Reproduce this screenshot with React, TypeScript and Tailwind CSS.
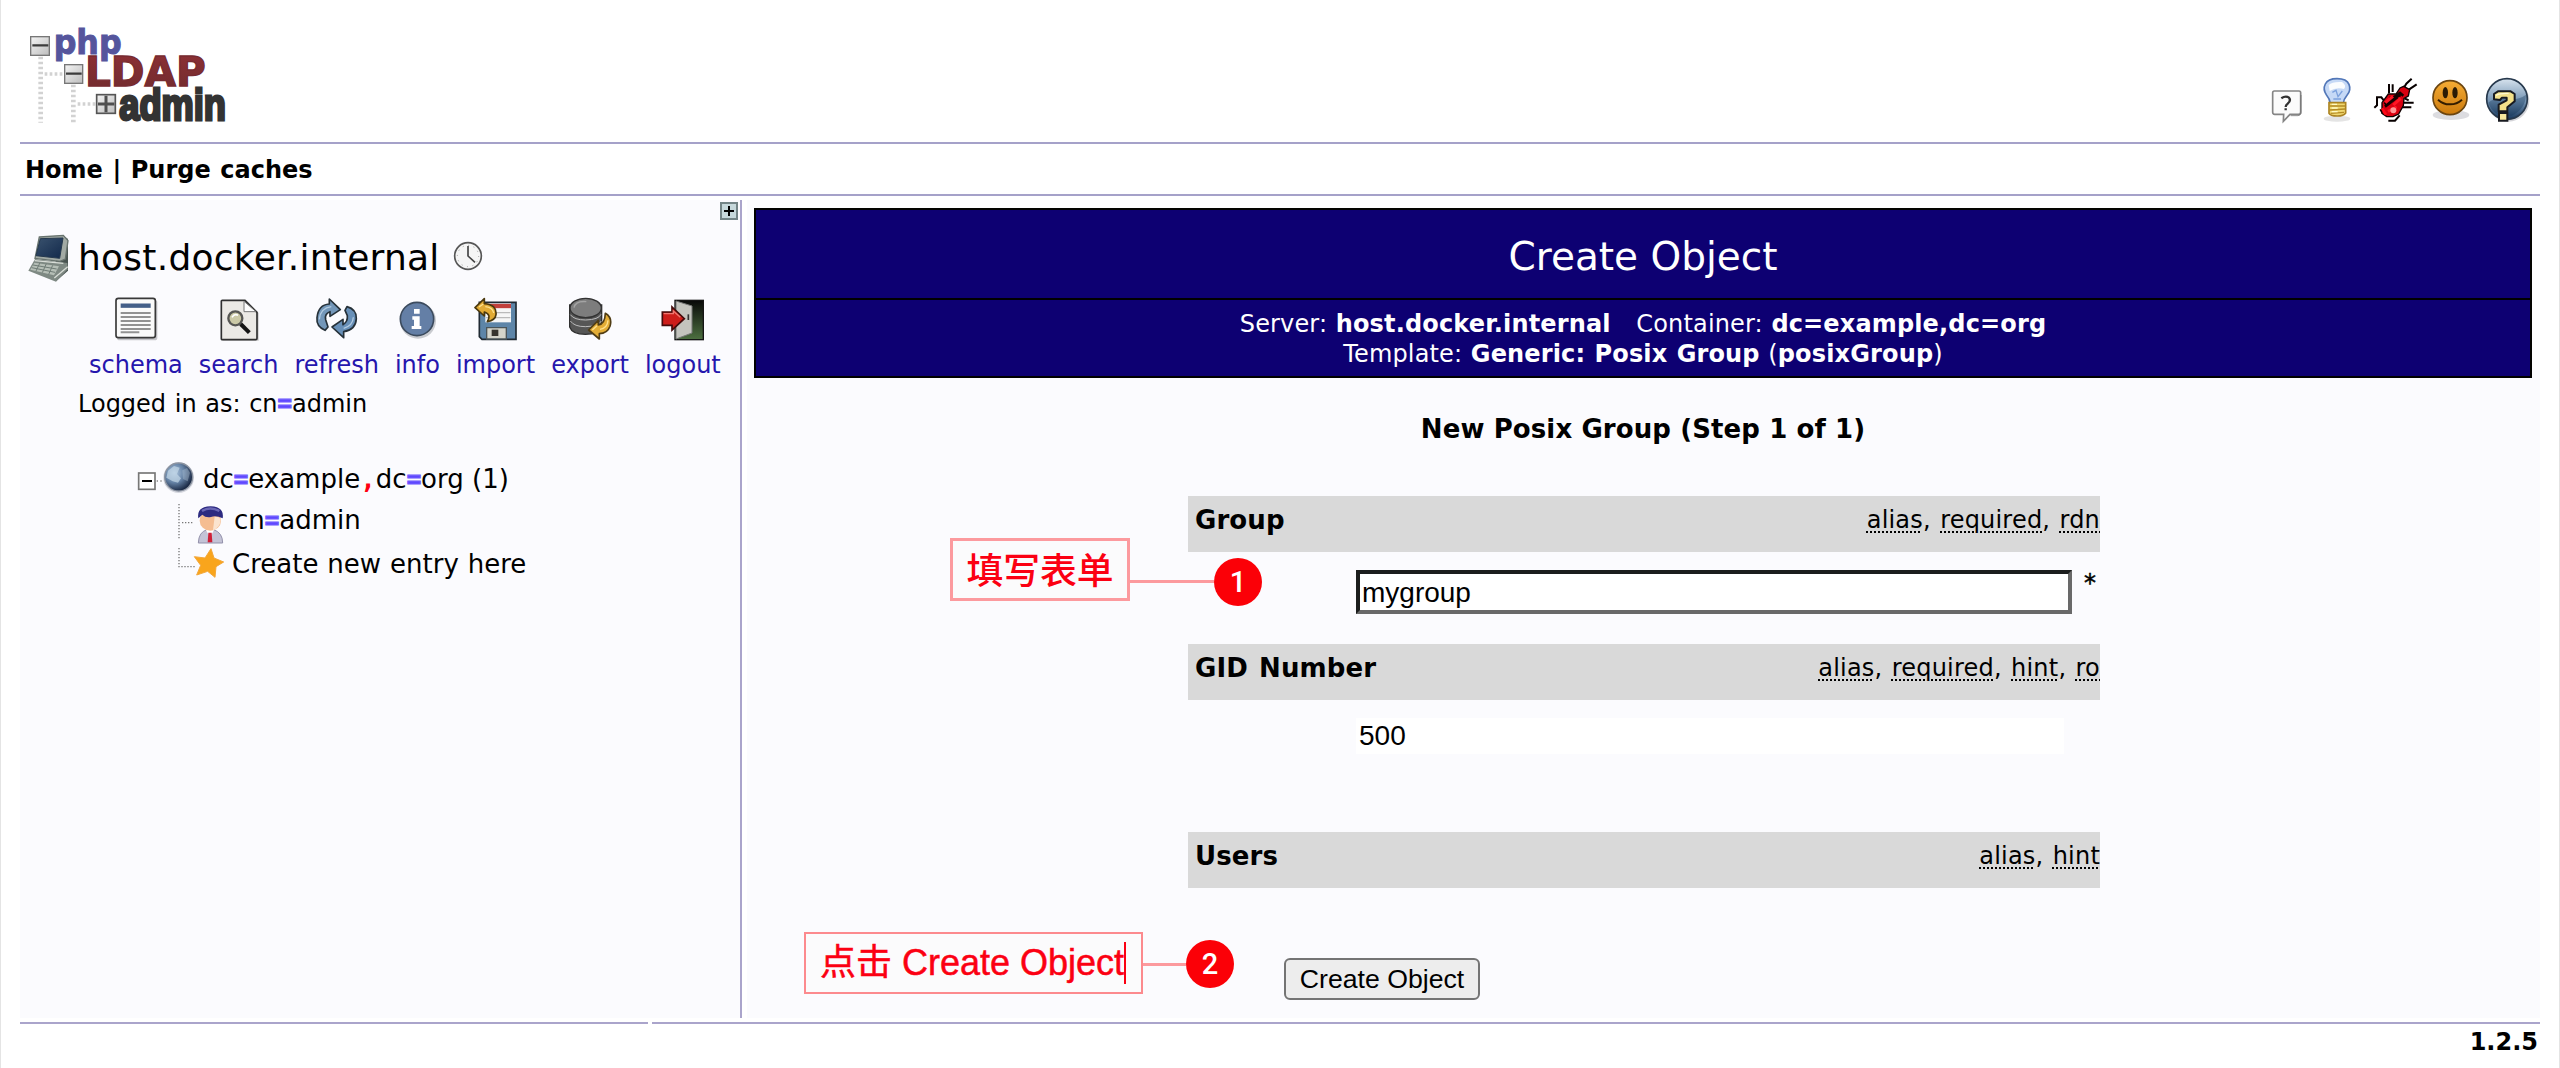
import type { ReactNode } from 'react';

function Logo() {
  return (
    <svg className="mt-5 h-[110px] w-[220px] overflow-visible" viewBox="60 60 660 330">
      <defs>
        <linearGradient id="nodeFill" x1="0" y1="0" x2="1" y2="1">
          <stop offset="0" stopColor="#f4f4f4" />
          <stop offset="1" stopColor="#bdbdbd" />
        </linearGradient>
        <linearGradient id="redFill" x1="0" y1="0" x2="0" y2="1">
          <stop offset="0" stopColor="#8f3035" />
          <stop offset="1" stopColor="#6e2c2e" />
        </linearGradient>
      </defs>
      <g stroke="#d2d2d2" fill="none">
        <path d="M122 170V368M220 254V368" strokeWidth="14" strokeDasharray="8 7" />
        <path d="M134 222H190M233 312H286" strokeWidth="11" strokeDasharray="8 7" />
      </g>
      <g fill="url(#nodeFill)" stroke="#777" strokeWidth="4">
        <rect x="92" y="110" width="56" height="56" />
        <rect x="194" y="194" width="54" height="56" />
        <rect x="290" y="284" width="56" height="56" stroke="#555" strokeWidth="5" />
      </g>
      <path d="M97 136H145M198 221H245" stroke="#3c3c3c" strokeWidth="7" />
      <path d="M294 312H343M318 287V337" stroke="#505050" strokeWidth="9" />
      <g fontFamily="DejaVu Sans" fontWeight="700">
        <text x="161" y="163" fontSize="103" textLength="204" lengthAdjust="spacingAndGlyphs" fill="#55559c" stroke="#55559c" strokeWidth="3">php</text>
        <text x="255" y="258" fontSize="121" textLength="362" lengthAdjust="spacingAndGlyphs" fill="url(#redFill)" stroke="#772b30" strokeWidth="4">LDAP</text>
      </g>
      <text x="358" y="359" fontSize="132" fontFamily="Liberation Sans" fontWeight="700" textLength="320" lengthAdjust="spacingAndGlyphs" fill="#333" stroke="#333" strokeWidth="9">admin</text>
    </svg>
  );
}

function HeaderIcons() {
  return (
    <div className="mt-[75px] flex h-[50px]">
      <svg className="h-[50px] w-11" viewBox="84 75 132 150">
        <path d="M103 123H177Q182 123 182 128V186Q182 193 175 193H150L130 214L131 193H104Q98 193 98 187V128Q98 123 103 123Z" fill="#fbfbfb" stroke="#858585" strokeWidth="5" />
        <path d="M183 135V190Q181 197 174 197H152" fill="none" stroke="#666" strokeWidth="2" />
        <path d="M124 145Q137 136 147 143Q154 152 143 161Q137 165 137 171M137 175V181" fill="none" stroke="#333" strokeWidth="7" />
      </svg>
      <svg className="h-[50px] w-[50px]" viewBox="216 75 150 150">
        <ellipse cx="291" cy="206" rx="40" ry="9" fill="#e4e4e4" />
        <path d="M271 160Q269 146 259 134Q248 118 256 102Q264 86 291 86Q320 86 327 103Q334 120 321 136Q311 148 310 160Z" fill="#c6d9f6" stroke="#5277b8" strokeWidth="5" />
        <path d="M266 105Q277 94 306 96Q321 106 312 117Q288 111 269 123Z" fill="#fff" opacity=".9" />
        <path d="M277 127L288 121L294 140L307 123M280 147H303" stroke="#7ca1dd" strokeWidth="4" fill="none" />
        <path d="M267 158H317V189Q311 198 292 198Q271 198 267 190Z" fill="#f0d870" stroke="#ac8423" strokeWidth="5" />
        <path d="M269 168H315M269 180L315 177M272 190L312 187" stroke="#b48b24" strokeWidth="4" />
        <path d="M275 163H291M275 174H293M275 185H293" stroke="#fffac4" strokeWidth="4" />
      </svg>
      <svg className="h-[50px] w-[60px]" viewBox="366 75 180 150">
        <g fill="none" stroke="#080000" strokeWidth="6">
          <path d="M447 102V130M458 103V126M489 118L499 101L515 86M502 122L530 103M490 158H521M486 172H514M494 145L506 151M432 152L424 142H411V166L403 173M445 212H465L479 196M428 190L421 178" />
        </g>
        <path d="M426 158L445 132H468L480 114L491 109L509 119L505 138L492 145L490 167L476 192L459 200H440L426 190Z" fill="#d90010" stroke="#100000" strokeWidth="4" />
        <path d="M433 162L480 129L490 137M448 145L482 136M435 170L473 141" stroke="#160000" strokeWidth="8" fill="none" />
        <path d="M436 158L459 139M460 165L482 145M444 184L470 171" stroke="#ff1525" strokeWidth="9" />
        <circle cx="460" cy="181" r="9" fill="#ff9494" />
        <path d="M426 175L438 194" stroke="#ff0918" strokeWidth="8" />
      </svg>
      <svg className="h-[50px] w-14" viewBox="546 75 168 150">
        <defs>
          <linearGradient id="smile" x1="0" y1="0" x2="0" y2="1">
            <stop offset="0" stopColor="#f5ac35" />
            <stop offset="1" stopColor="#cc7a0c" />
          </linearGradient>
        </defs>
        <ellipse cx="633" cy="195" rx="55" ry="15" fill="#dcdce0" />
        <circle cx="630" cy="143" r="51" fill="url(#smile)" stroke="#6b4510" strokeWidth="5" />
        <ellipse cx="616" cy="128" rx="8" ry="17" fill="#2b1b05" />
        <ellipse cx="645" cy="128" rx="8" ry="17" fill="#2b1b05" />
        <path d="M594 149Q611 164 631 163Q650 163 666 149" fill="none" stroke="#331d00" strokeWidth="6" />
      </svg>
      <svg className="h-[50px] w-[62px]" viewBox="714 75 186 150">
        <defs>
          <linearGradient id="helpFill" x1="0" y1="0" x2="0" y2="1">
            <stop offset="0" stopColor="#d7e3ee" />
            <stop offset=".55" stopColor="#7594b3" />
            <stop offset="1" stopColor="#17375d" />
          </linearGradient>
        </defs>
        <circle cx="805" cy="152" r="63" fill="#d4d4d8" />
        <circle cx="801" cy="147" r="61" fill="url(#helpFill)" stroke="#27394d" strokeWidth="5" />
        <path d="M745 158Q760 143 790 147Q836 152 858 134Q857 177 815 197Q762 205 745 158Z" fill="#123456" opacity=".35" />
        <path d="M762 148V132L774 124H812L824 132V154L802 172V184H776V164L800 151V143H786L780 150Z" fill="#f3e08a" stroke="#181a20" strokeWidth="6" strokeLinejoin="round" />
        <path d="M777 189H802V212H777Z" fill="#f6e79d" stroke="#181a20" strokeWidth="6" />
        <path d="M768 136Q780 129 806 130" stroke="#fffad0" strokeWidth="4" fill="none" />
      </svg>
    </div>
  );
}

function HostIcon() {
  return (
    <svg className="h-[52px] w-[59px]" viewBox="60 126 177 156">
      <defs>
        <linearGradient id="screen" x1="0" y1="0" x2="1" y2="1">
          <stop offset="0" stopColor="#3a526e" />
          <stop offset="1" stopColor="#12294b" />
        </linearGradient>
      </defs>
      <path d="M188 136L204 147V242L168 274L160 240Z" fill="#495451" />
      <path d="M118 141L190 136L204 152L196 207L180 214L105 205Z" fill="#a2aaa4" stroke="#68736e" strokeWidth="4" />
      <path d="M121 146L189 144L179 205L108 197Z" fill="url(#screen)" stroke="#26394e" strokeWidth="3" />
      <path d="M105 207L202 219L203 238L168 275L85 242Z" fill="#7e8983" />
      <path d="M103 218L177 229L162 256L91 239Z" fill="#b5beb6" />
      <path d="M99 225L170 237M95 233L165 247M120 218L108 243M139 221L127 248M158 226L146 253" stroke="#6f7c76" strokeWidth="3" />
      <path d="M104 212L190 220M163 264L203 230" stroke="#d8ddd7" strokeWidth="4" />
    </svg>
  );
}

function ClockIcon() {
  return (
    <svg className="mt-2 ml-3 h-8 w-8" viewBox="216 150 96 96">
      <circle cx="264" cy="198" r="40" fill="#f5f5f5" stroke="#565656" strokeWidth="5" />
      <circle cx="264" cy="198" r="32" fill="none" stroke="#999" strokeWidth="3" strokeDasharray="3 13.7" />
      <path d="M264 168V198L285 217" fill="none" stroke="#444" strokeWidth="5" />
    </svg>
  );
}

const toolClass = 'h-12 w-11';

const tools: { label: string; icon: ReactNode }[] = [
  {
    label: 'schema',
    icon: (
      <svg className={toolClass} viewBox="338 318 132 144">
        <rect x="347" y="330" width="121" height="121" rx="8" fill="#c5c5c9" />
        <rect x="344" y="325" width="118" height="118" rx="7" fill="#fafafa" stroke="#393939" strokeWidth="5" />
        <path d="M358 347H448" stroke="#445f88" strokeWidth="13" />
        <path d="M358 369H448M358 381H448M358 393H448M358 405H448M358 417H448M358 427H414" stroke="#929292" strokeWidth="6" />
      </svg>
    ),
  },
  {
    label: 'search',
    icon: (
      <svg className={toolClass} viewBox="648 318 132 144">
        <path d="M665 336H740L773 369V452H665Z" fill="#c8c8c8" />
        <path d="M661 333Q661 331 664 331H732L768 367V445Q768 449 764 449H664Q661 449 661 446Z" fill="#ebe9e5" stroke="#303030" strokeWidth="5" />
        <path d="M729 334V365H765Z" fill="#fdfdfd" stroke="#777" strokeWidth="3" />
        <circle cx="703" cy="385" r="21" fill="#cbc9a6" stroke="#565653" strokeWidth="7" />
        <path d="M693 382Q700 370 711 376" stroke="#fff" strokeWidth="5" fill="none" />
        <path d="M719 402L745 428" stroke="#151515" strokeWidth="12" />
      </svg>
    ),
  },
  {
    label: 'refresh',
    icon: (
      <svg className={toolClass} viewBox="944 318 132 144">
        <path d="M974 421Q947 409 950 383Q954 344 987 342V327L1020 359L989 379V365Q972 371 976 389L983 411Z" fill="#7397b9" stroke="#263139" strokeWidth="5" strokeLinejoin="round" />
        <path d="M1040 350Q1069 358 1068 386Q1066 420 1030 425V443L995 411L1028 388V404Q1043 395 1041 377L1034 361Z" fill="#6890b8" stroke="#263139" strokeWidth="5" strokeLinejoin="round" />
        <path d="M957 388Q960 354 993 350M1059 382Q1058 407 1030 415" stroke="#b2cbe1" strokeWidth="4" fill="none" />
      </svg>
    ),
  },
  {
    label: 'info',
    icon: (
      <svg className={toolClass} viewBox="52 318 132 144">
        <circle cx="121" cy="392" r="54" fill="#c9cbd0" />
        <circle cx="118" cy="387" r="50" fill="#647fa6" stroke="#3c4b5e" strokeWidth="5" />
        <path d="M109 357H126V371H109ZM104 379H126V408H131V417H102V408H109V389H104Z" fill="#fff" />
      </svg>
    ),
  },
  {
    label: 'import',
    icon: (
      <svg className={toolClass} viewBox="286 318 132 144">
        <path d="M302 337H412V448H310L302 440Z" fill="#5d85a8" stroke="#202a33" strokeWidth="5" />
        <path d="M320 340H397V397H320Z" fill="#f7f7f7" />
        <path d="M320 348H397" stroke="#c2403c" strokeWidth="13" />
        <path d="M322 368H395M322 383H395" stroke="#bbb" strokeWidth="4" />
        <path d="M324 413H383V447H324Z" fill="#d4d4ca" stroke="#4b5559" strokeWidth="4" />
        <path d="M339 419H359V438H339Z" fill="#37352f" />
        <path d="M289 353L317 326V341Q355 344 352 374Q350 391 326 395Q339 373 317 366V378Z" fill="#e1ab35" stroke="#4b390e" strokeWidth="5" strokeLinejoin="round" />
        <path d="M301 351L314 342M320 350Q342 352 345 369" stroke="#ffe491" strokeWidth="4" fill="none" />
      </svg>
    ),
  },
  {
    label: 'export',
    icon: (
      <svg className={toolClass} viewBox="578 318 132 144">
        <path d="M583 345V411Q591 433 630 433Q671 433 679 411V345Z" fill="#565656" stroke="#303030" strokeWidth="4" />
        <path d="M585 374Q596 390 631 390Q670 389 677 373M585 393Q597 410 630 410Q670 409 678 393" fill="none" stroke="#bcbcbc" strokeWidth="3" />
        <ellipse cx="631" cy="354" rx="47" ry="29" fill="#7d7d7d" stroke="#333" strokeWidth="4" />
        <path d="M596 353Q600 332 633 335" stroke="#a4a4a4" strokeWidth="4" fill="none" />
        <path d="M690 370Q712 383 704 409Q696 431 672 431V447L640 420L669 391V405Q689 403 690 370Z" fill="#e3ad36" stroke="#503d15" strokeWidth="5" strokeLinejoin="round" />
        <path d="M651 420L665 407M674 418Q696 415 698 391" stroke="#ffe18c" strokeWidth="4" fill="none" />
      </svg>
    ),
  },
  {
    label: 'logout',
    icon: (
      <svg className={toolClass} viewBox="850 318 132 144">
        <defs>
          <linearGradient id="doorway" x1="0" y1="0" x2="0" y2="1">
            <stop offset="0" stopColor="#080808" />
            <stop offset="1" stopColor="#4d7040" />
          </linearGradient>
        </defs>
        <rect x="892" y="331" width="85" height="118" fill="url(#doorway)" stroke="#151515" strokeWidth="4" />
        <path d="M895 333L943 348V429L895 447Z" fill="#c4c4be" stroke="#777" strokeWidth="3" />
        <path d="M932 373V390" stroke="#333" strokeWidth="5" />
        <path d="M854 366H883V351L920 386L883 420V406H854Z" fill="#cd1d1a" stroke="#440b0b" strokeWidth="5" />
        <path d="M858 371H887V363L908 382" stroke="#ef7770" strokeWidth="4" fill="none" />
      </svg>
    ),
  },
];

function RootIcons() {
  return (
    <svg className="h-10 w-[73px]" viewBox="90 60 219 120">
      <defs>
        <radialGradient id="globe" cx=".35" cy=".35" r=".7">
          <stop offset="0" stopColor="#aec6df" />
          <stop offset=".5" stopColor="#6582a5" />
          <stop offset="1" stopColor="#121f39" />
        </radialGradient>
      </defs>
      <rect x="116" y="99" width="49" height="49" fill="#fff" stroke="#777" strokeWidth="5" />
      <path d="M126 123H156" stroke="#000" strokeWidth="6" />
      <path d="M170 123H192" stroke="#888" strokeWidth="4" strokeDasharray="4 7" />
      <circle cx="236" cy="113" r="46" fill="#d5d7df" />
      <circle cx="236" cy="111" r="42" fill="url(#globe)" stroke="#8b93a0" strokeWidth="4" />
      <path d="M204 92L222 78L239 83L231 102L243 115L234 128L218 124L199 113Z" fill="#c4d8e8" opacity=".7" />
      <path d="M247 91L261 84L270 98L263 124L249 117Z" fill="#b1c2d4" opacity=".4" />
    </svg>
  );
}

function PersonIcons() {
  return (
    <svg className="h-11 w-16" viewBox="210 183 192 132">
      <path d="M237 192V296M246 248H282" stroke="#777" strokeWidth="4" strokeDasharray="4 5" />
      <path d="M295 309Q296 276 321 269L330 277L341 269Q368 278 368 309Z" fill="#c4c3d6" stroke="#9290aa" strokeWidth="3" />
      <path d="M318 270L330 293L342 270" fill="#fff" />
      <path d="M325 278H335L337 307H323Z" fill="#ce2038" />
      <ellipse cx="331" cy="242" rx="32" ry="30" fill="#f5bd91" />
      <path d="M344 230Q360 229 362 240Q360 263 339 271" fill="#fbe4cf" />
      <path d="M295 235Q289 200 332 199Q374 201 368 235Q348 225 333 231Q317 234 307 224Z" fill="#2c2a80" />
      <path d="M306 213Q330 198 358 213" stroke="#6966b4" strokeWidth="7" fill="none" />
    </svg>
  );
}

function StarIcons() {
  return (
    <svg className="h-11 w-[62px]" viewBox="210 315 186 132">
      <path d="M237 324V380H284" stroke="#777" strokeWidth="4" strokeDasharray="4 5" fill="none" />
      <path d="M333 326L342 354L371 366L348 380L345 412L323 394L290 405L302 376L283 350L315 354Z" fill="#f9a51c" stroke="#f3a73a" strokeWidth="3" />
    </svg>
  );
}

const Eq = () => (
  <span className="font-['DejaVu_Sans_Mono'] text-2xl leading-none font-bold text-[#5f48ff] [-webkit-text-stroke:1.2px_#6f5bff]">=</span>
);

function Notes({ items }: { items: string[] }) {
  return (
    <div className="pt-[9px] leading-[30px] tracking-[0.2px] [word-spacing:1.5px]">
      {items.map((item, i) => (
        <span key={item}>
          {i > 0 && ', '}
          <span className="underline decoration-dotted decoration-2 underline-offset-[3px]">{item}</span>
        </span>
      ))}
    </div>
  );
}

function FieldBar({ title, notes }: { title: string; notes: string[] }) {
  return (
    <div className="flex h-14 justify-between bg-[#d9d9d9] pl-[7px]">
      <div className="pt-[9px] text-[26px] leading-[30px] font-bold tracking-[0.1px] [word-spacing:2px]">{title}</div>
      <Notes items={notes} />
    </div>
  );
}

function Badge({ n }: { n: number }) {
  return (
    <div className="flex size-12 items-center justify-center rounded-full bg-[#fb0007] font-['Roboto'] text-[29px] font-medium text-white">
      {n}
    </div>
  );
}

export default function App() {
  return (
    <div className="h-[1068px] w-[2560px] overflow-hidden bg-white font-['DejaVu_Sans',sans-serif] text-2xl text-black">
      <div className="relative flex h-[1068px] flex-col border-x border-[#e4e4e4] px-[19px]">
        <header className="flex h-[142px] justify-between">
          <Logo />
          <HeaderIcons />
        </header>
        <nav className="h-[54px] border-y-2 border-[#a5a1c9] pt-[11px] pl-[5px] leading-[30px] font-bold [word-spacing:1.2px]">Home | Purge caches</nav>

        <main className="mt-1 flex h-[818px] gap-[5px]">
          <aside className="relative w-[722px] shrink-0 border-r-2 border-[#aaa4cb] bg-[#fbfbfe] pt-8">
            <div className="absolute top-0.5 right-0.5 size-[18px]">
              <svg className="size-[18px]" viewBox="0 0 18 18">
                <rect x="1" y="1" width="16" height="16" fill="#c6d8db" stroke="#738486" strokeWidth="2" />
                <path d="M4 9H14M9 4V14" stroke="#000" strokeWidth="2" />
              </svg>
            </div>
            <div className="flex h-[52px]">
              <HostIcon />
              <div className="-ml-px text-4xl leading-[52px] tracking-[0.25px]">host.docker.internal</div>
              <ClockIcon />
            </div>
            <div className="mt-3 ml-[69px] flex gap-4">
              {tools.map((t) => (
                <div key={t.label} className="flex flex-col items-center gap-1.5 leading-[30px] text-[#2516ad]">
                  {t.icon}
                  {t.label}
                </div>
              ))}
            </div>
            <div className="mt-[9px] ml-[58px] h-[30px] leading-[30px] [word-spacing:1px]">
              Logged in as: cn<Eq />admin
            </div>
            <div className="mt-[41px] text-[26px] leading-[39px]">
              <div className="ml-[110px] flex h-[41px]">
                <RootIcons />
                <div>
                  dc<Eq />example<span className="font-['DejaVu_Sans_Mono'] leading-none font-bold text-[#ff0010]">,</span>dc<Eq />org (1)
                </div>
              </div>
              <div className="ml-[150px] flex h-11">
                <PersonIcons />
                <div>cn<Eq />admin</div>
              </div>
              <div className="ml-[150px] flex h-11">
                <StarIcons />
                <div className="[word-spacing:0.7px]">Create new entry here</div>
              </div>
            </div>
          </aside>

          <section className="relative grow bg-[#fbfbfe] pt-2 pr-2 pl-[7px]">
            <div className="h-[170px] border-2 border-black bg-[#0d0072] text-center text-white">
              <div className="h-[90px] border-b-2 border-black pt-[5px] text-[39px] leading-[83px]">Create Object</div>
              <div className="pt-[9px] leading-[30px] tracking-[0.15px] [word-spacing:0.8px]">
                <div>
                  Server: <b>host.docker.internal</b>&nbsp;&nbsp; Container: <b>dc=example,dc=org</b>
                </div>
                <div>
                  Template: <b>Generic: Posix Group</b> (<b>posixGroup</b>)
                </div>
              </div>
            </div>
            <h3 className="mt-9 text-center text-[26px] leading-[30px] font-bold tracking-[0.1px]">New Posix Group (Step 1 of 1)</h3>

            <form className="mt-[52px] ml-[434px] w-[912px]">
              <FieldBar title="Group" notes={['alias', 'required', 'rdn']} />
              <div className="flex h-[92px] pt-[18px] pl-[168px]">
                <div className="h-11 w-[716px] border-4 border-t-[#1b1d1d] border-r-[#696969] border-b-[#696969] border-l-[#1b1d1d] bg-white pl-0.5 font-['Liberation_Sans'] text-[28px] leading-[38px]">
                  mygroup
                </div>
                <span className="ml-3 leading-[26px] [-webkit-text-stroke:0.5px_#000]">*</span>
              </div>
              <FieldBar title="GID Number" notes={['alias', 'required', 'hint', 'ro']} />
              <div className="h-[132px] pt-[18px] pl-[168px]">
                <div className="h-9 w-[708px] bg-white pl-[3px] font-['Liberation_Sans'] text-[28px] leading-9">500</div>
              </div>
              <FieldBar title="Users" notes={['alias', 'hint']} />
              <div className="mt-[70px] ml-24 h-[42px] w-[196px] rounded-md border-2 border-[#747474] bg-[#ededed] text-center font-['Liberation_Sans'] text-[26.67px] leading-[38px]">
                Create Object
              </div>
            </form>

            <div className="absolute top-[338px] left-[203px] flex h-[63px] items-start">
              <div className="h-[63px] w-[180px] border-[3px] border-[#fc9a9e] bg-[#fbfbfc] text-center font-['Liberation_Sans','Noto_Sans_CJK_SC',sans-serif] text-[36.8px] leading-[61px] font-medium text-[#fb0012]">
                填写表单
              </div>
              <div className="mt-[42px] h-[3px] w-[84px] bg-[#fc9a9e]" />
              <div className="mt-5">
                <Badge n={1} />
              </div>
            </div>
            <div className="absolute top-[732px] left-[57px] flex h-[63px] items-start">
              <div className="flex h-[62px] w-[339px] items-center border-2 border-[#fc8a8e] bg-[#fbfbfc] pl-3.5 font-['Liberation_Sans','Noto_Sans_CJK_SC',sans-serif] text-4xl text-[#fb0012]">
                <span className="whitespace-pre [-webkit-text-stroke:0.5px_#fb0012]">点击 Create Object</span>
                <span className="h-[42px] w-0.5 bg-[#fb0012]" />
              </div>
              <div className="mt-[31px] h-[3px] w-[43px] bg-[#fc9a9e]" />
              <div className="mt-2">
                <Badge n={2} />
              </div>
            </div>
          </section>
        </main>

        <div className="mt-1 flex h-0.5 gap-1">
          <div className="w-[628px] bg-[#aaa4cb]" />
          <div className="grow bg-[#aaa4cb]" />
        </div>
        <footer className="mt-1 mr-0.5 text-right leading-7 font-bold">1.2.5</footer>
      </div>
    </div>
  );
}
